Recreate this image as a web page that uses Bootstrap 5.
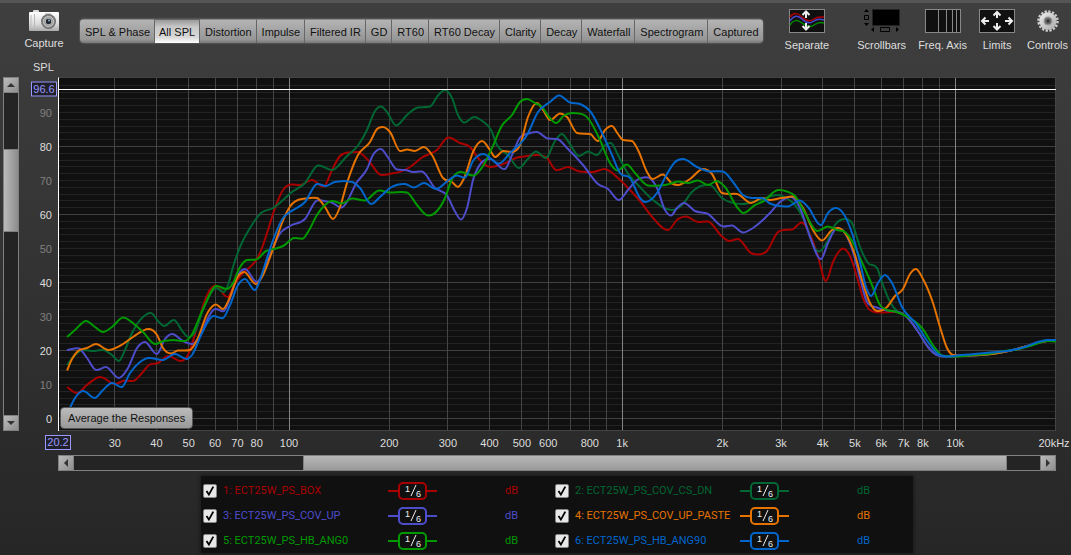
<!DOCTYPE html>
<html lang="en">
<head>
<meta charset="utf-8">
<meta name="viewport" content="width=device-width, initial-scale=1">
<title>All SPL</title>
<link href="https://cdn.jsdelivr.net/npm/bootstrap@5.3.0/dist/css/bootstrap.min.css" rel="stylesheet">
<style>
  body { background: linear-gradient(#3f3f3f, #262626) fixed; color: #ddd; font: 11px/16px "Liberation Sans", Arial, sans-serif; }
  .app { min-height: 100vh; border-top: 3px solid #555; }
  .topbar { height: 54px; padding-right: 3px; }
  .tool { background: none; border: 0; padding: 0; color: #ddd; min-width: 36px; }
  .tool svg { display: block; margin: 0 auto; }
  .capture { width: 88px; padding-top: 7px; }
  .capture svg { margin-bottom: 4px; }
  .tools { gap: 12px; padding-top: 6px; }
  .tools svg { margin-bottom: 4px; }
  .tabs { margin: 16px 0 0 -8px; height: 24px; border-radius: 4px; overflow: hidden; box-shadow: 0 0 2px #888; }
  .tab-btn { background: linear-gradient(#b4b4b4, #969696 85%, #777); border: 0; border-right: 1px solid #666; border-top: 1px solid #888; color: #111; padding: 0 4px 0 5px; white-space: nowrap; }
  .tab-btn:last-child { border-right: 0; }
  .tab-btn.active { background: linear-gradient(#999, #c8c8c8 30%, #d8d8d8 75%, #fff); border-color: #666; padding: 0 4px; }
  .axis-title { height: 20px; padding-left: 33px; line-height: 20px; }
  .plot-row { padding: 0 15px 0 3px; min-height: 300px; }
  .y-axis { width: 39px; }
  .y-tick { position: absolute; right: 6px; transform: translateY(-50%); color: #ddd; }
  .y-tick.dim { color: #808080; }
  .cursor-tag { position: absolute; border: 1px solid #99f; background: #202028; color: #99f; width: 26px; line-height: 13px; text-align: center; }
  .y-axis .cursor-tag { right: 1px; transform: translateY(-50%); }
  .x-axis { height: 24px; margin: 0 15px 0 58px; }
  .x-axis .cursor-tag { left: 0; top: 4px; transform: translateX(-50%); }
  .x-tick { position: absolute; top: 4px; transform: translateX(-50%); }
  .plot { background: #101010; border-top: 1px solid #444; border-left: 1px solid #fff; }
  .plot svg.curves { position: absolute; inset: 0; width: 100%; height: 100%; }
  .average { position: absolute; left: 1px; bottom: 2px; height: 22px; padding: 0 7px; border: 1px solid #555; border-radius: 4px; background: linear-gradient(#bbb, #999); color: #111; }
  .bar-v { width: 16px; background: #242424; border: 1px solid #808080; }
  .bar-h { height: 16px; margin: 0 15px 0 58px; background: #242424; border: 1px solid #808080; }
  .arrow { border: 0; padding: 0; background: linear-gradient(135deg, #bbb, #8e8e8e); width: 14px; height: 14px; line-height: 0; }
  .bar-v .knob { background: linear-gradient(90deg, #bbb, #8c8c8c); border: solid #808080; border-width: 1px 0; }
  .bar-h .knob { background: linear-gradient(#b8b8b8, #999); border: solid #808080; border-width: 0 1px; }
  .arrow-v { border-bottom: 1px solid #808080; height: 15px; }
  .arrow-v.end { border-bottom: 0; border-top: 1px solid #808080; }
  .arrow-h { border-right: 1px solid #808080; width: 15px; }
  .arrow-h.end { border-right: 0; border-left: 1px solid #808080; }
  .legend-wrap { padding: 5px 15px 2px 58px; }
  .legend-box { max-width: 712px; margin: 0 auto; padding: 2px 8px 0 0; background: #101010; box-shadow: 0 0 3px 1px #1a1a1a; font-family: Roboto, "Liberation Sans", sans-serif; }
  .trace { height: 25px; padding-left: 2px; color: var(--c); }
  .trace label { width: 165px; padding-left: 6px; white-space: nowrap; }
  .trace input { appearance: none; margin: 0; width: 14px; height: 14px; border: 1px solid #888; border-radius: 2px; background: #e8e8e8 url("data:image/svg+xml,%3Csvg xmlns='http://www.w3.org/2000/svg' viewBox='0 0 12 12'%3E%3Cpath d='M2.5 6l2.4 3.6L9.3 1.6' fill='none' stroke='%23000' stroke-width='1.8'/%3E%3C/svg%3E"); }
  .smooth { color: var(--c); background: none; border: 0; padding: 0; width: 49px; margin-left: 6px; margin-right: 68px; height: 18px; }
  .smooth::before, .smooth::after { content: ""; flex: 1; height: 2px; background: var(--c); }
  .smooth span { width: 29px; height: 18px; border: 2px solid var(--c); border-radius: 5px; }
  .smooth svg { display: block; width: 25px; height: 14px; }
</style>
</head>
<body>
<div class="app d-flex flex-column">
  <header class="topbar d-flex align-items-start">
    <button class="tool capture" type="button">
      <svg width="30" height="21" viewBox="0 0 30 21">
        <defs><linearGradient id="cam" x2="0" y2="1"><stop stop-color="#fff"/><stop offset=".6" stop-color="#ddd"/><stop offset="1" stop-color="#aaa"/></linearGradient>
        <radialGradient id="lens"><stop stop-color="#222"/><stop offset=".35" stop-color="#444"/><stop offset=".4" stop-color="#aaa"/><stop offset=".75" stop-color="#888"/><stop offset="1" stop-color="#666"/></radialGradient></defs>
        <path d="M4 3V1q0-1 1-1h4q1 0 1 1v2z" fill="#ddd"/>
        <rect y="2" width="30" height="19" rx="1" fill="url(#cam)"/>
        <path d="M5.500 4v15M2 5v14" stroke="#bbb"/><path d="M16 4h6" stroke="#aaa"/>
        <circle cx="19.500" cy="11.500" r="7.500" fill="url(#lens)"/><circle cx="19.500" cy="11.500" r="5" fill="none" stroke="#ccc"/>
        <circle cx="19.500" cy="11.500" r="2.300" fill="#1c2630"/><circle cx="20" cy="10.500" r=".9" fill="#9bd"/>
      </svg>
      Capture
    </button>
    <nav class="tabs d-flex" aria-label="Graphs">
      <button class="tab-btn" type="button">SPL &amp; Phase</button>
      <button class="tab-btn active" type="button">All SPL</button>
      <button class="tab-btn" type="button">Distortion</button>
      <button class="tab-btn" type="button">Impulse</button>
      <button class="tab-btn" type="button">Filtered IR</button>
      <button class="tab-btn" type="button">GD</button>
      <button class="tab-btn" type="button">RT60</button>
      <button class="tab-btn" type="button">RT60 Decay</button>
      <button class="tab-btn" type="button">Clarity</button>
      <button class="tab-btn" type="button">Decay</button>
      <button class="tab-btn" type="button">Waterfall</button>
      <button class="tab-btn" type="button">Spectrogram</button>
      <button class="tab-btn" type="button">Captured</button>
    </nav>
    <div class="tools d-flex ms-auto">
      <button class="tool me-3" type="button">
        <svg width="36" height="24" viewBox="0 0 36 24">
          <rect x=".5" y=".5" width="35" height="23" fill="#101010" stroke="#888"/>
          <g fill="none" stroke-width="1.500"><path d="M1 8C5 3 9 4 13 8s8 5 12 2 7-2 10-2" stroke="#b00000"/><path d="M1 12C5 6 9 6 13 10s8 5 12 2 7-2 10-1" stroke="#4848d0"/><path d="M1 16C5 10 9 11 13 14s8 5 12 2 7-3 10-2" stroke="#008c00"/></g>
          <path d="M17 9V3M13.500 6L17 2.500 20.500 6M17 14v6M13.500 17l3.500 3.500L20.500 17" fill="none" stroke="#eee" stroke-width="2"/>
        </svg>
        Separate
      </button>
      <button class="tool" type="button">
        <svg width="36" height="24" viewBox="0 0 36 24">
          <rect x="8.500" y=".5" width="27" height="16" fill="#000" stroke="#222"/>
          <path d="M0 3l2.500-3L5 3zM0 14l2.500 3L5 14zM10 18v5l-3-2.500zM32 18v5l3-2.500z" fill="#000"/>
          <path d="M.5 6.500h4v4h-4zM16.500 18.500h9v4h-9z" fill="none" stroke="#000"/>
        </svg>
        Scrollbars
      </button>
      <button class="tool" type="button">
        <svg width="36" height="24" viewBox="0 0 36 24"><rect x=".5" y=".5" width="35" height="23" fill="#101010" stroke="#888"/><path d="M13.500 1v22M21.500 1v22M27.500 1v22M31.500 1v22" stroke="#888"/></svg>
        Freq. Axis
      </button>
      <button class="tool" type="button">
        <svg width="36" height="24" viewBox="0 0 36 24"><rect x=".5" y=".5" width="35" height="23" fill="#101010" stroke="#888"/>
          <path d="M18 9V3M14.500 6.500L18 3l3.500 3.500M18 14v6M14.500 17l3.500 3.500 3.500-3.500M10 12H3M6.500 8.500L3 12l3.500 3.500M26 12h7M29.500 8.500L33 12l-3.500 3.500" fill="none" stroke="#eee" stroke-width="2"/></svg>
        Limits
      </button>
      <button class="tool" type="button">
        <svg width="24" height="24" viewBox="0 0 24 24">
          <defs><linearGradient id="gear" x2="1" y2="1"><stop stop-color="#eee"/><stop offset="1" stop-color="#aaa"/></linearGradient></defs>
          <circle cx="12" cy="12" r="9.500" fill="none" stroke="#ccc" stroke-width="2.500" stroke-dasharray="2.300 1.430"/>
          <circle cx="12" cy="12" r="8.700" fill="url(#gear)"/><circle cx="12" cy="12" r="4.500" fill="#999"/><circle cx="12" cy="12" r="3.200" fill="#666"/><circle cx="12" cy="12" r="1.500" fill="#333"/>
        </svg>
        Controls
      </button>
    </div>
  </header>

  <div class="axis-title">SPL</div>

  <main class="plot-row d-flex flex-grow-1">
    <div class="bar-v d-flex flex-column">
      <button class="arrow arrow-v" type="button" aria-label="Scroll up"><svg width="14" height="14"><path d="M3 9l4-4 4 4z" fill="#333"/></svg></button>
      <div style="flex:56"></div><div class="knob" style="flex:81"></div><div style="flex:183"></div>
      <button class="arrow arrow-v end" type="button" aria-label="Scroll down"><svg width="14" height="14"><path d="M3 5l4 4 4-4z" fill="#333"/></svg></button>
    </div>
    <div class="y-axis position-relative" id="yAxis"></div>
    <div class="plot position-relative flex-grow-1">
      <svg class="curves" id="plot" viewBox="59 78 997 353" preserveAspectRatio="none" role="img" aria-label="SPL against frequency"></svg>
      <button class="average" type="button">Average the Responses</button>
    </div>
  </main>

  <div class="x-axis position-relative" id="xAxis"></div>

  <div class="bar-h d-flex">
    <button class="arrow arrow-h" type="button" aria-label="Scroll left"><svg width="14" height="14"><path d="M9 3L5 7l4 4z" fill="#333"/></svg></button>
    <div style="flex:229"></div><div class="knob" style="flex:703"></div><div style="flex:33"></div>
    <button class="arrow arrow-h end" type="button" aria-label="Scroll right"><svg width="14" height="14"><path d="M5 3l4 4-4 4z" fill="#333"/></svg></button>
  </div>

  <div class="legend-wrap"><div class="legend-box"><div class="row g-0" id="legend"></div></div></div>
</div>

<script src="https://cdn.jsdelivr.net/npm/bootstrap@5.3.0/dist/js/bootstrap.bundle.min.js"></script>
<script>
const W = 998, H = 353, X0 = 58, Y0 = 78;
const xOf = f => 289 + 333.1 * Math.log10(f / 100);
const yOf = db => 418.5 - 3.4 * db;
const pctX = x => ((x - X0) / W * 100).toFixed(3) + '%';
const pctY = y => ((y - Y0) / H * 100).toFixed(3) + '%';

const tail = '903,314 912,323 919,333 928,347 936,354.500 947,356.500 962,356 980,355 1013,350 1033,344.500 1047,341 1056,340.500';
const traces = [
  { name: '1: ECT25W_PS_BOX', color: '#a80000', pts: '67,387 77,393 88,384 100,377 115,384 125,380.500 133,381 142,373 149,365 158,363 168,356 181,361 188,355 196,331 205,300 215,285.500 228,297 234,285 243,273 250,267 257,259 262,248 268,230 275,208 283,190 291,184.500 300,185 312,180 324,186.500 332,170 340,156 348,152.500 358,152 368,160 381,175 395,173 410,167 422,157.500 437,150 448,137.500 460,143 470,147 478,158 490,167 503,164 520,157 538,155 547,158 556,170 568,167 580,171.500 593,172 605,169 618,178 630,190 640,201 653,218 668,230 678,219 686,216.500 698,222 708,221.500 722,236.500 729,241 738,239 751,253 757,254.500 767,251 778,232 784,230 792,229.500 802,222.500 808,230 817,253 826,281 833,262 843,248.500 850,256 857,277 863,298 870,310 880,312.500 895,312 ' + tail },
  { name: '2: ECT25W_PS_COV_CS_DN', color: '#006633', pts: '67,365 75,355 83,350 93,351 103,350 112,355 119,361 125,350 132,333 143,317 151,313 158,321 164,326 174,320 183,332 188,337 195,332 203,310 216,288 224,292 228,285 233,267 240,247 250,228 261,213 273,208 283,200 290,193.500 305,183 318,165.500 332,170 347,156 358,145.500 367,130 375,111 381,106.500 387,112 396,125.500 407,115 418,107.500 430,106.500 438,95.500 445,90 452,98 458,115 464,122.500 474,117 483,121.500 491,130 497,145 508,155 519,168 527,160 536,151.500 546,158 555,141 562,134 568,141 579,156 588,151.500 597,155 605,145 611,143 618,155 627,172 640,187 653,200 672,210 682,205 692,192 710,185 722,198 742,204 760,200 778,195 786,198 795,205 807,227 813,245 819,251.500 827,242 835,225 845,219 852,223 860,247 868,263 877,268 883,285 890,302 897,311 ' + tail },
  { name: '3: ECT25W_PS_COV_UP', color: '#4d4dcc', pts: '67,350 79,348.500 87,358 96,370 106,367 119,378 128,368 137,348 145,342 157,354 165,339 172,334 183,341 193,344 202,332 209,316 215,309 224,311 230,298 238,275 245,269 257,282 262,275 268,260 273,248 279,235 290,226 305,219 317,200.500 330,202 342,207.500 357,182 367,169 373,155 381,149 388,157.500 397,169.500 405,170 413,172 422,171.500 435,188 447,195.500 455,211.500 461,219.500 467,208 473,180 482,162 490,159 505,169 512,155 520,137.500 527,134 537,132 548,138.500 557,139 568,149 583,165 598,184 608,189 619,200 628,190 637,180 648,177.500 657,188 665,210 671,215.500 677,208 684,203 695,211 708,214 723,226.500 732,225.500 743,232.500 753,228 770,213 780,202 791,197 800,208 810,237 821,259 828,243 837,228 845,233 853,252 860,278 867,302 877,307.500 887,310.500 ' + tail },
  { name: '4: ECT25W_PS_COV_UP_PASTE', color: '#e67300', pts: '67,370.500 72,359 78,351 87,348 96,344 108,350 123,344 133,337 149,329 157,335 163,348 171,353.500 178,350.500 190,350 197,340 208,312 216,304.500 223,309 230,297 237,278 244,272 256,284 262,277 269,260 275,243 282,223 290,206.500 302,199 317,198 325,207 333,219 340,207 347,183 358,155 370,142 377,129 383,127 390,132 400,151 407,149.500 415,151 424,147 432,155 443,178 452,182 458,187 465,176 473,152 482,141 490,150 495,157 503,151 512,152 520,145 528,117 537,103 543,110 550,120 560,113.500 567,117 577,133 590,134 598,141 605,130 612,126 618,134 623,140 632,141 638,150 647,172 652,179 663,174.500 672,183.500 678,185 690,179 703,169 712,174 722,193 737,194 751,203 762,198 770,200 782,198 793,196.500 803,208 813,230 822,240.500 832,230 838,228 845,233 855,255 862,280 870,303 877,311 887,307 895,296 903,289 910,274 916,269 923,279 933,303 940,327 947,348 953,355 962,355.500 980,355 1013,350 1033,344.500 1047,341 1056,340.500' },
  { name: '5: ECT25W_PS_HB_ANG0', color: '#009900', pts: '67,337 75,330 86,321 95,327 103,332 112,327 123,317.500 134,324 143,332 155,344 164,341 173,340 185,341 191,336 203,309 216,286 227,289 233,283 239,269 247,260 256,259.500 266,251 274,249 284,245.500 294,238 303,238.500 308,232 317,215 323,207 332,201 342,203.500 352,198.500 365,200.500 379,190.500 390,192.500 407,192.500 417,205 428,215.500 437,211 445,198 452,179 460,172 474,175.500 483,166 492,148 502,125.500 512,115 520,102 527,99 535,103 542,107 549,117 556,123 564,115.500 572,113 585,115.500 590,121 600,140 610,163 617,170.500 627,164.500 635,173 648,185.500 665,185 678,181.500 688,183 698,180.500 708,185 717,181 725,187 737,207 743,213 755,205 763,201.500 778,190 787,191.500 795,196 805,213 817,231 828,226.500 837,230 845,232 852,241 860,258 872,285 880,305 887,310 895,311.500 905,315.500 922,328 935,348 942,355.500 955,356.500 980,354.500 1013,350 1033,345 1047,341 1056,341.500' },
  { name: '6: ECT25W_PS_HB_ANG90', color: '#0066cc', pts: '69,410 75,398 83,391 95,398 103,390 112,383 122,387 130,373 140,362 149,358 163,360 175,354 187,359 192,355 202,333 213,316 223,318 230,305 238,285 245,279 255,290 262,274 267,258 275,235 283,218 290,212 305,202 317,184 326,186 335,182 344,181 352,182 360,188 371,204 380,197 390,188 405,184 414,187.500 424,183 436,189 450,179 457,175.500 465,177.500 473,161 483,154 499,163.500 510,153 527,135 538,112 550,102 559,95.500 570,102.500 580,104 590,111 603,135 612,155 620,173 630,178 640,198 645,202 657,193 667,174 675,162 683,159 697,167 710,171.500 723,171.500 733,182 743,195 752,198 762,198 770,203.500 780,206 788,206.500 800,200.500 808,207 821,225 828,213 836,208 843,213 852,233 860,262 866,287 871,296 878,283 885,275 892,283 902,307 917,325 928,342 938,354 947,356.500 962,355 997,352 1023,347.500 1038,342 1047,340 1056,340' }
];

// Cubic spline through the sample points; flat at peaks and dips, with the
// slope elsewhere limited so that no segment overshoots its end points.
function smoothPath(text) {
  const p = text.split(' ').map(s => s.split(',').map(Number)), n = p.length;
  const h = [], d = [], m = [];
  for (let i = 0; i < n - 1; i++) {
    h.push(p[i + 1][0] - p[i][0]);
    d.push((p[i + 1][1] - p[i][1]) / h[i]);
  }
  for (let i = 0; i < n; i++) {
    if (i === 0) m.push(d[0]);
    else if (i === n - 1) m.push(d[n - 2]);
    else {
      const a = d[i - 1], b = d[i], mean = (a * h[i] + b * h[i - 1]) / (h[i] + h[i - 1]);
      const small = Math.min(Math.abs(a), Math.abs(b));
      if (small < 0.15) m.push(mean * 0.3);
      else m.push(a * b < 0 ? mean * 0.3 : Math.sign(a) * Math.min(Math.abs(mean), 3 * small));
    }
  }
  let s = 'M' + p[0];
  for (let i = 0; i < n - 1; i++) {
    const k = h[i] / 3;
    s += `C${p[i][0] + k},${p[i][1] + m[i] * k} ${p[i + 1][0] - k},${p[i + 1][1] - m[i + 1] * k} ${p[i + 1]}`;
  }
  return s;
}

let g = '<g shape-rendering="crispEdges">';
const line = (x1, y1, x2, y2, c) => `<path d="M${x1} ${y1}L${x2} ${y2}" stroke="${c}" vector-effect="non-scaling-stroke"/>`;
for (let db = -2; db < 100; db += 2) if (db % 20) g += line(X0, yOf(db), X0 + W, yOf(db), '#232323');
for (let db = 0; db < 100; db += 20) g += line(X0, yOf(db), X0 + W, yOf(db), '#404040');
for (const dec of [10, 100, 1000, 10000]) for (let k = 1; k < 10; k++) {
  const f = dec * k;
  if (f > 20 && f < 20000) g += line(xOf(f), Y0, xOf(f), Y0 + H, k === 1 ? '#858585' : '#454545');
}
g += line(X0, Y0 + H - .5, X0 + W, Y0 + H - .5, '#444') + line(X0 + W - .5, Y0, X0 + W - .5, Y0 + H, '#444');
g += '</g>';
for (const t of traces) g += `<path d="${smoothPath(t.pts)}" fill="none" stroke="${t.color}" stroke-width="2" vector-effect="non-scaling-stroke"/>`;
g += `<g shape-rendering="crispEdges">${line(X0, 89.5, X0 + W, 89.5, '#fff')}</g>`;
document.getElementById('plot').innerHTML = g;

let y = '';
for (let db = 0; db <= 90; db += 10) y += `<span class="y-tick${db % 20 ? ' dim' : ''}" style="top:${pctY(yOf(db) + 1)}">${db}</span>`;
document.getElementById('yAxis').innerHTML = y + `<span class="cursor-tag" style="top:${pctY(90)}">96.6</span>`;

let x = '<span class="cursor-tag">20.2</span>';
for (const f of [30, 40, 50, 60, 70, 80, 100, 200, 300, 400, 500, 600, 800, 1000, 2000, 3000, 4000, 5000, 6000, 7000, 8000, 10000, 20000])
  x += `<span class="x-tick" style="left:${pctX(Math.min(xOf(f), 1054))}">${f < 1000 ? f : f / 1000 + (f === 20000 ? 'kHz' : 'k')}</span>`;
document.getElementById('xAxis').innerHTML = x;

document.getElementById('legend').innerHTML = traces.map((t, i) => `
  <div class="col-6"><div class="trace d-flex align-items-center" style="--c:${t.color}">
    <input type="checkbox" id="t${i}" checked><label for="t${i}">${t.name}</label>
    <button class="smooth d-flex align-items-center" type="button" aria-label="Smoothing"><span><svg viewBox="0 0 25 14" fill="#eee" font-family="Liberation Sans" font-size="9"><text x="5" y="8">1</text><text x="16" y="13">6</text><path d="M11 12L16 1" stroke="#eee"/></svg></span></button>
    <span>dB</span></div></div>`).join('');
</script>
</body>
</html>
